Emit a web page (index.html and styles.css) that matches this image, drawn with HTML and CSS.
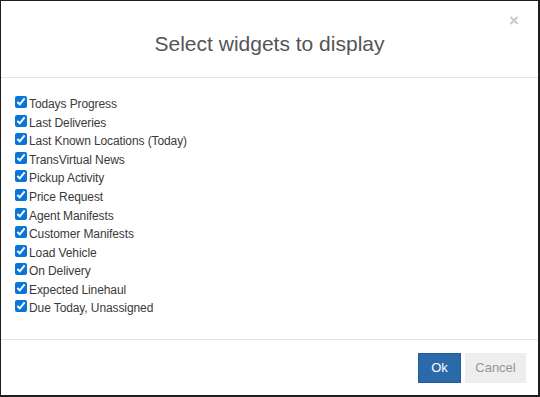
FILE: index.html
```html
<!DOCTYPE html>
<html>
<head>
<meta charset="utf-8">
<link rel="stylesheet" href="styles.css">
</head>
<body>
<div class="modal">
  <div class="modal-header">
    <span class="close">&times;</span>
    <h4 class="title">Select widgets to display</h4>
  </div>
  <div class="modal-body">
    <label class="row"><input type="checkbox" checked><span>Todays Progress</span></label>
    <label class="row"><input type="checkbox" checked><span>Last Deliveries</span></label>
    <label class="row"><input type="checkbox" checked><span>Last Known Locations (Today)</span></label>
    <label class="row"><input type="checkbox" checked><span>TransVirtual News</span></label>
    <label class="row"><input type="checkbox" checked><span>Pickup Activity</span></label>
    <label class="row"><input type="checkbox" checked><span>Price Request</span></label>
    <label class="row"><input type="checkbox" checked><span>Agent Manifests</span></label>
    <label class="row"><input type="checkbox" checked><span>Customer Manifests</span></label>
    <label class="row"><input type="checkbox" checked><span>Load Vehicle</span></label>
    <label class="row"><input type="checkbox" checked><span>On Delivery</span></label>
    <label class="row"><input type="checkbox" checked><span>Expected Linehaul</span></label>
    <label class="row"><input type="checkbox" checked><span>Due Today, Unassigned</span></label>
  </div>
  <div class="modal-footer">
    <button class="btn btn-ok">Ok</button>
    <button class="btn btn-cancel">Cancel</button>
  </div>
</div>
</body>
</html>
```
FILE: styles.css
```css
html, body {
  margin: 0;
  padding: 0;
  background: #1e1e1e;
  height: 397px;
  overflow: hidden;
}
body {
  padding: 1px 0 0 1px;
  font-family: "Liberation Sans", Arial, sans-serif;
}
.modal {
  width: 537px;
  height: 394px;
  background: #fff;
  display: flex;
  flex-direction: column;
}
.modal-header {
  position: relative;
  height: 76px;
  border-bottom: 1px solid #e5e5e5;
  display: flex;
  align-items: center;
  justify-content: center;
}
.title {
  margin: 0;
  font-weight: normal;
  font-size: 21px;
  color: #555;
  padding-top: 10px;
}
.close {
  position: absolute;
  right: 19px;
  top: 10px;
  font-size: 17px;
  color: #c8c8c8;
  font-weight: bold;
}
.modal-body {
  flex: 1;
  padding: 17px 14px 0 14px;
  border-bottom: 1px solid #e5e5e5;
}
.row {
  display: flex;
  align-items: center;
  height: 18.55px;
  font-size: 12px;
  color: #3a3a3a;
  letter-spacing: -0.1px;
}
.row input {
  margin: 0 2px 0 0;
  width: 12px;
  height: 12px;
  accent-color: #0a75d8;
  position: relative;
  top: -2px;
}
.modal-footer {
  height: 55px;
  display: flex;
  justify-content: flex-end;
  align-items: center;
  gap: 4px;
  padding-right: 12px;
}
.btn {
  font-family: "Liberation Sans", Arial, sans-serif;
  font-size: 13px;
  height: 30px;
  border: none;
  border-radius: 0;
  cursor: pointer;
}
.btn-ok {
  width: 43px;
  background: #2a6aab;
  color: #fff;
  border: 1px solid #245d96;
}
.btn-cancel {
  width: 61px;
  background: #eeeeee;
  color: #949494;
}
```
